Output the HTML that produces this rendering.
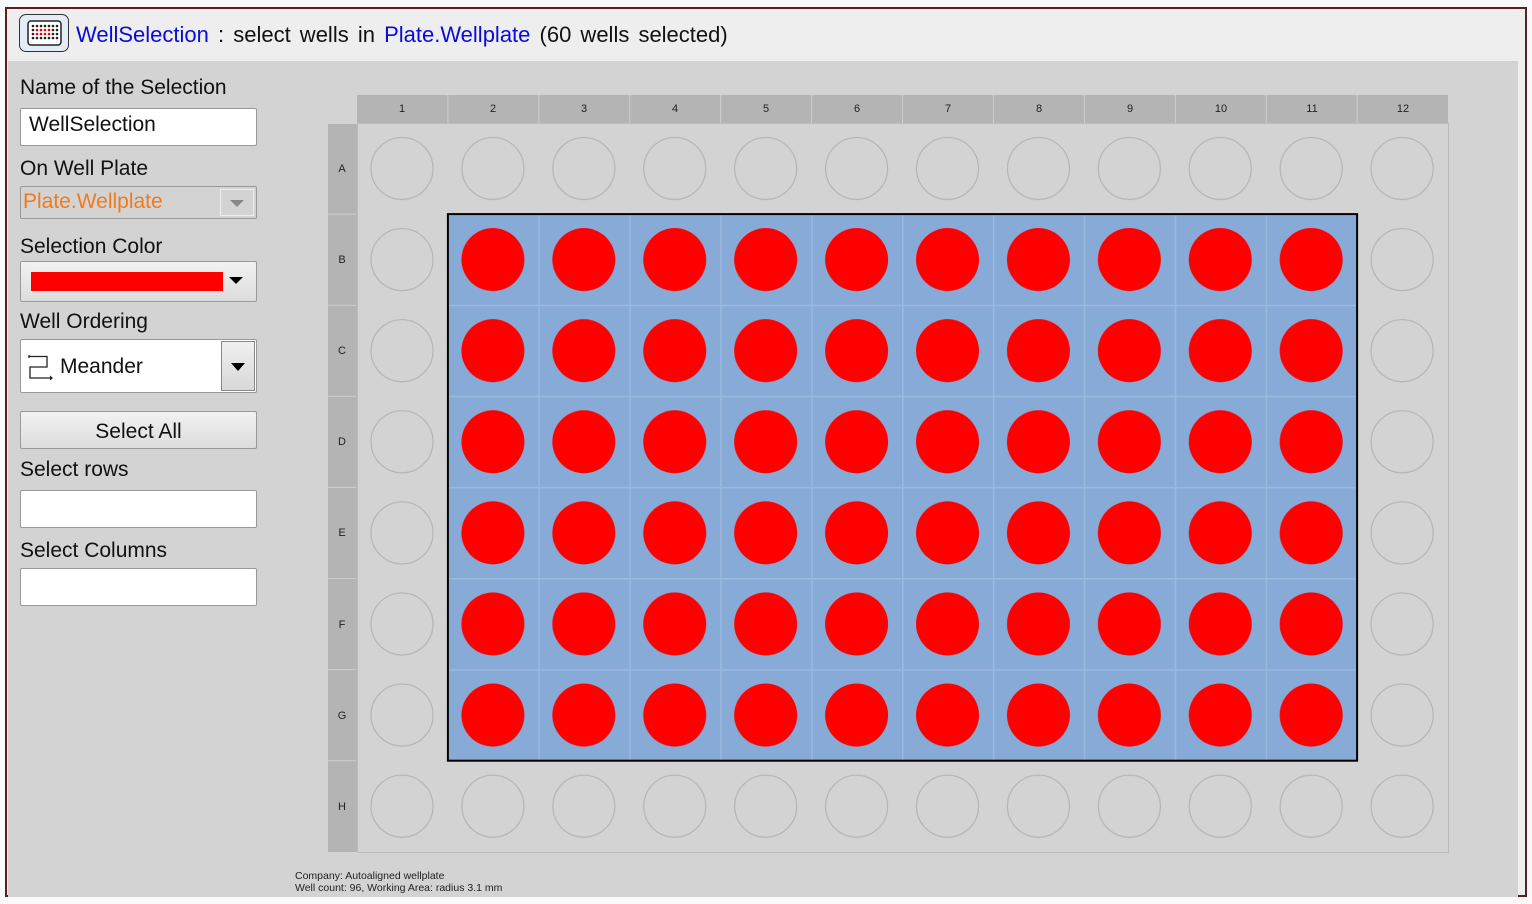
<!DOCTYPE html>
<html><head><meta charset="utf-8"><style>
*{box-sizing:border-box;margin:0;padding:0}
body{width:1532px;height:904px;background:#fafafa;position:relative;overflow:hidden;font-family:"Liberation Sans",sans-serif;}
.frame{position:absolute;left:5px;top:7px;width:1522px;height:890px;border:2px solid #5b1f1f;background:#eeeeee}
.panel{position:absolute;left:8px;top:61px;width:1510px;height:836px;background:#d3d3d3}
.title{position:absolute;left:76px;top:22px;font-size:22px;color:#111;word-spacing:3px;white-space:nowrap}
.blue{color:#0b0bd8}
.icon{position:absolute;left:19px;top:14px;width:50px;height:38px;border:1px solid #333;border-radius:7px;background:#e4ecf7}
.lbl{position:absolute;left:20px;font-size:21px;color:#111;white-space:nowrap}
.box{position:absolute;left:20px;width:237px;border:1px solid #999;border-radius:2px;background:#fff}
.foot{position:absolute;left:295px;font-size:10.5px;color:#222;white-space:nowrap;line-height:12px}
</style></head><body>
<div class="frame"></div>
<div class="panel"></div>
<div class="icon"><svg width="50" height="38" viewBox="0 0 50 38">
<rect x="8" y="6" width="33" height="24" rx="3" fill="#fff" stroke="#222" stroke-width="1.5"/>
<g fill="#222">
<circle cx="13" cy="11" r="1.3"/><circle cx="17" cy="11" r="1.3"/><circle cx="21" cy="11" r="1.3"/><circle cx="25" cy="11" r="1.3"/><circle cx="29" cy="11" r="1.3"/><circle cx="33" cy="11" r="1.3"/><circle cx="37" cy="11" r="1.3"/>
<circle cx="13" cy="15" r="1.3"/><circle cx="33" cy="15" r="1.3"/><circle cx="37" cy="15" r="1.3"/>
<circle cx="13" cy="19" r="1.3"/><circle cx="33" cy="19" r="1.3"/><circle cx="37" cy="19" r="1.3"/>
<circle cx="13" cy="23" r="1.3"/><circle cx="17" cy="23" r="1.3"/><circle cx="21" cy="23" r="1.3"/><circle cx="25" cy="23" r="1.3"/><circle cx="29" cy="23" r="1.3"/><circle cx="33" cy="23" r="1.3"/><circle cx="37" cy="23" r="1.3"/>
</g><g fill="#e00">
<circle cx="17" cy="15" r="1.3"/><circle cx="21" cy="15" r="1.3"/><circle cx="25" cy="15" r="1.3"/><circle cx="29" cy="15" r="1.3"/>
<circle cx="17" cy="19" r="1.3"/><circle cx="21" cy="19" r="1.3"/><circle cx="25" cy="19" r="1.3"/><circle cx="29" cy="19" r="1.3"/>
</g></svg></div>
<div class="title"><span class="blue">WellSelection</span> : select wells in <span class="blue">Plate.Wellplate</span> (60 wells selected)</div>

<div class="lbl" style="top:76px">Name of the Selection</div>
<div class="box" style="top:108px;height:38px;padding:4px 8px;font-size:21px;color:#111">WellSelection</div>
<div class="lbl" style="top:157px">On Well Plate</div>
<div class="box" style="top:186px;height:33px;background:#d3d3d3;border-color:#999;padding:3px 2px;font-size:21px;color:#f07a1e">Plate.Wellplate
<div style="position:absolute;right:2px;top:2px;width:34px;height:27px;border:1px solid #eee"><div style="position:absolute;left:9px;top:10px;border-left:7px solid transparent;border-right:7px solid transparent;border-top:7px solid #888"></div></div></div>
<div class="lbl" style="top:235px">Selection Color</div>
<div class="box" style="top:261px;height:41px;background:linear-gradient(#f2f2f2,#dcdcdc)">
<div style="position:absolute;left:10px;top:10px;width:192px;height:19px;background:#f00"></div>
<div style="position:absolute;left:208px;top:15px;border-left:7px solid transparent;border-right:7px solid transparent;border-top:7px solid #000"></div></div>
<div class="lbl" style="top:310px">Well Ordering</div>
<div class="box" style="top:339px;height:54px">
<svg style="position:absolute;left:7px;top:12px" width="28" height="30" viewBox="0 0 28 30"><path d="M1 3v3M1 4.5H19V15H2V26H24" fill="none" stroke="#222" stroke-width="1.3"/><path d="M22 23.5l3 2.5-3 2.5z" fill="#222"/></svg>
<div style="position:absolute;left:39px;top:15px;font-size:21px;color:#111">Meander</div>
<div style="position:absolute;right:1px;top:1px;width:34px;height:50px;border:1px solid #888;background:linear-gradient(#f0f0f0,#d8d8d8)"><div style="position:absolute;left:9px;top:21px;border-left:7px solid transparent;border-right:7px solid transparent;border-top:8px solid #000"></div></div></div>
<div class="box" style="top:411px;height:38px;background:linear-gradient(#f2f2f2,#dcdcdc);text-align:center;font-size:21px;padding-top:8px;color:#111">Select All</div>
<div class="lbl" style="top:458px">Select rows</div>
<div class="box" style="top:490px;height:38px"></div>
<div class="lbl" style="top:539px">Select Columns</div>
<div class="box" style="top:568px;height:38px"></div>

<svg style="position:absolute;left:0;top:0" width="1532" height="904">
<defs>
<pattern id="e" patternUnits="userSpaceOnUse" x="357" y="123" width="90.92" height="91.1"><circle cx="45" cy="45.5" r="31" fill="none" stroke="#b4b4b4" stroke-width="1.2"/></pattern>
<pattern id="r" patternUnits="userSpaceOnUse" x="357" y="123" width="90.92" height="91.1"><rect x="0.5" y="0.5" width="90.42" height="90.6" fill="none" stroke="#9bb8de" stroke-width="1"/><circle cx="45" cy="45.5" r="31.5" fill="#f00"/></pattern>
</defs>
<rect x="357" y="95" width="1091" height="28" fill="#b4b4b4"/>
<rect x="328" y="124" width="29" height="728" fill="#b4b4b4"/>
<rect x="357.5" y="123.5" width="1091" height="729" fill="#d3d3d3" stroke="#bbb"/>
<g stroke="#cfcfcf" stroke-width="1">
<line x1="447.9" y1="95" x2="447.9" y2="123"/><line x1="538.8" y1="95" x2="538.8" y2="123"/><line x1="629.8" y1="95" x2="629.8" y2="123"/><line x1="720.7" y1="95" x2="720.7" y2="123"/><line x1="811.6" y1="95" x2="811.6" y2="123"/><line x1="902.5" y1="95" x2="902.5" y2="123"/><line x1="993.4" y1="95" x2="993.4" y2="123"/><line x1="1084.4" y1="95" x2="1084.4" y2="123"/><line x1="1175.3" y1="95" x2="1175.3" y2="123"/><line x1="1266.2" y1="95" x2="1266.2" y2="123"/><line x1="1357.1" y1="95" x2="1357.1" y2="123"/>
<line x1="328" y1="214.1" x2="356" y2="214.1"/><line x1="328" y1="305.2" x2="356" y2="305.2"/><line x1="328" y1="396.3" x2="356" y2="396.3"/><line x1="328" y1="487.4" x2="356" y2="487.4"/><line x1="328" y1="578.5" x2="356" y2="578.5"/><line x1="328" y1="669.6" x2="356" y2="669.6"/><line x1="328" y1="760.7" x2="356" y2="760.7"/>
</g>
<rect x="357" y="123" width="1091" height="729" fill="url(#e)"/>
<rect x="447.9" y="214.1" width="909.2" height="546.6" fill="#88aad7"/>
<rect x="447.9" y="214.1" width="909.2" height="546.6" fill="url(#r)"/>
<rect x="447.9" y="214.1" width="909.2" height="546.6" fill="none" stroke="#000" stroke-width="2"/>
<g font-family="Liberation Sans, sans-serif" font-size="11" fill="#222" text-anchor="middle">
<text x="402" y="112">1</text><text x="493" y="112">2</text><text x="584" y="112">3</text><text x="675" y="112">4</text><text x="766" y="112">5</text><text x="857" y="112">6</text><text x="948" y="112">7</text><text x="1039" y="112">8</text><text x="1130" y="112">9</text><text x="1221" y="112">10</text><text x="1312" y="112">11</text><text x="1403" y="112">12</text>
<text x="342" y="172">A</text><text x="342" y="263">B</text><text x="342" y="354">C</text><text x="342" y="445">D</text><text x="342" y="536">E</text><text x="342" y="628">F</text><text x="342" y="719">G</text><text x="342" y="810">H</text>
</g>
</svg>
<div class="foot" style="top:870px">Company: Autoaligned wellplate<br>Well count: 96, Working Area: radius 3.1 mm</div>
</body></html>
